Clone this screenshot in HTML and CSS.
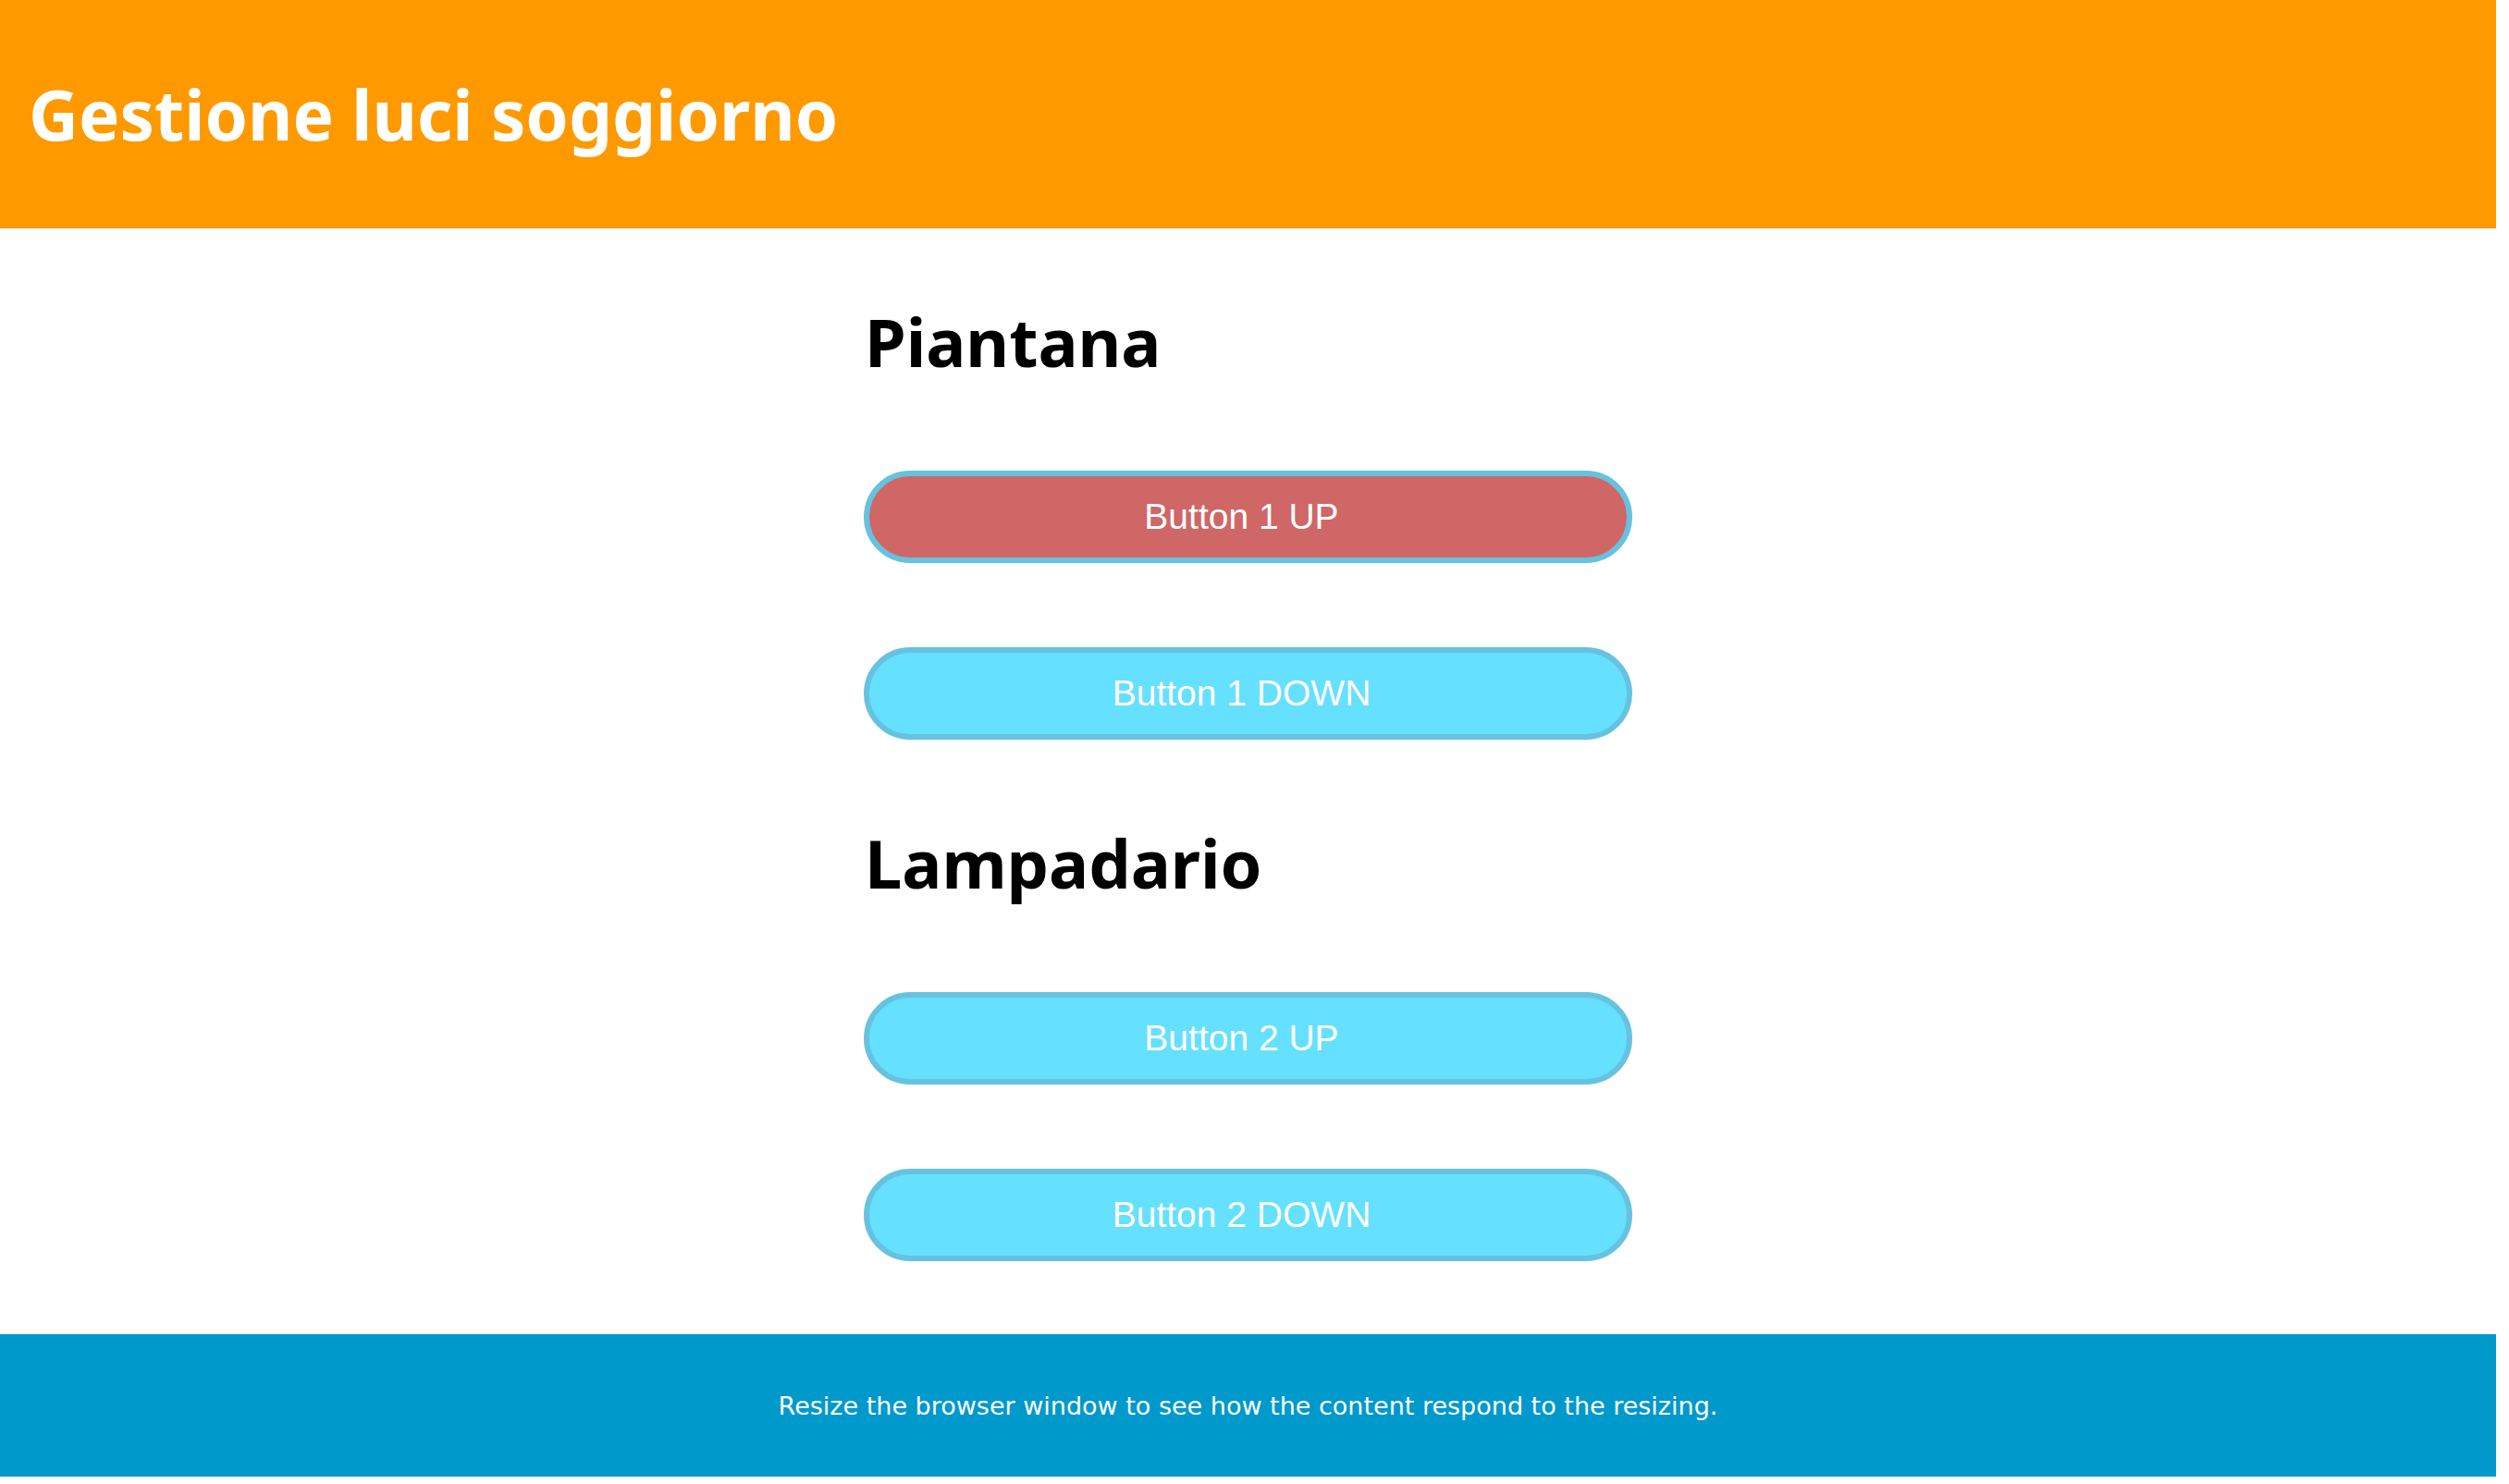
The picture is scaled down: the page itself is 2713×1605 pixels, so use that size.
FILE: index.html
```html
<!DOCTYPE html>
<html lang="it">
<head>
<meta charset="utf-8">
<title>Gestione luci soggiorno</title>
<link rel="stylesheet" href="styles.css">
</head>
<body>
<div class="page">
  <header class="topbar">
    <h1 class="title">Gestione luci soggiorno</h1>
  </header>
  <main class="content">
    <h2 class="group-title">Piantana</h2>
    <button class="btn btn-active">Button 1 UP</button>
    <button class="btn">Button 1 DOWN</button>
    <h2 class="group-title group-title-next">Lampadario</h2>
    <button class="btn">Button 2 UP</button>
    <button class="btn">Button 2 DOWN</button>
  </main>
  <footer class="bottombar">
    <p class="note">Resize the browser window to see how the content respond to the resizing.</p>
  </footer>
</div>
</body>
</html>
```

FILE: styles.css
```css
html, body {
  margin: 0;
  padding: 0;
  background: #ffffff;
}

.page {
  width: 2699px;
  display: flex;
  flex-direction: column;
}

.topbar {
  height: 247px;
  background: #ff9900;
  display: flex;
  align-items: center;
  padding-left: 31px;
  box-sizing: border-box;
}

.title {
  margin: 0;
  font-family: "Noto Sans", "DejaVu Sans", sans-serif;
  font-weight: 700;
  font-size: 74.5px;
  line-height: 1;
  color: #ffffff;
}

.content {
  width: 831px;
  margin: 0 auto;
  padding-top: 72px;
  padding-bottom: 79px;
  display: flex;
  flex-direction: column;
}

.group-title {
  margin: 0 0 90px 0;
  padding-left: 1px;
  font-family: "Noto Sans", "DejaVu Sans", sans-serif;
  font-weight: 700;
  font-size: 72px;
  line-height: 100px;
  color: #000000;
}

.group-title-next {
  margin-top: 83px;
}

.btn {
  height: 100px;
  width: 100%;
  border: 6px solid #67c2e0;
  border-radius: 50px;
  background: #66e0ff;
  color: #ffffff;
  font-family: "Liberation Sans", Arial, sans-serif;
  font-size: 39px;
  padding: 0 14px 0 0;
  box-sizing: border-box;
}

.btn + .btn {
  margin-top: 91px;
}

.btn-active {
  background: #cf6766;
}

.bottombar {
  height: 154px;
  background: #0099cc;
  display: flex;
  align-items: center;
  justify-content: center;
}

.note {
  margin: 0;
  font-family: "DejaVu Sans", "Noto Sans", sans-serif;
  font-size: 27px;
  color: #ffffff;
}
```
